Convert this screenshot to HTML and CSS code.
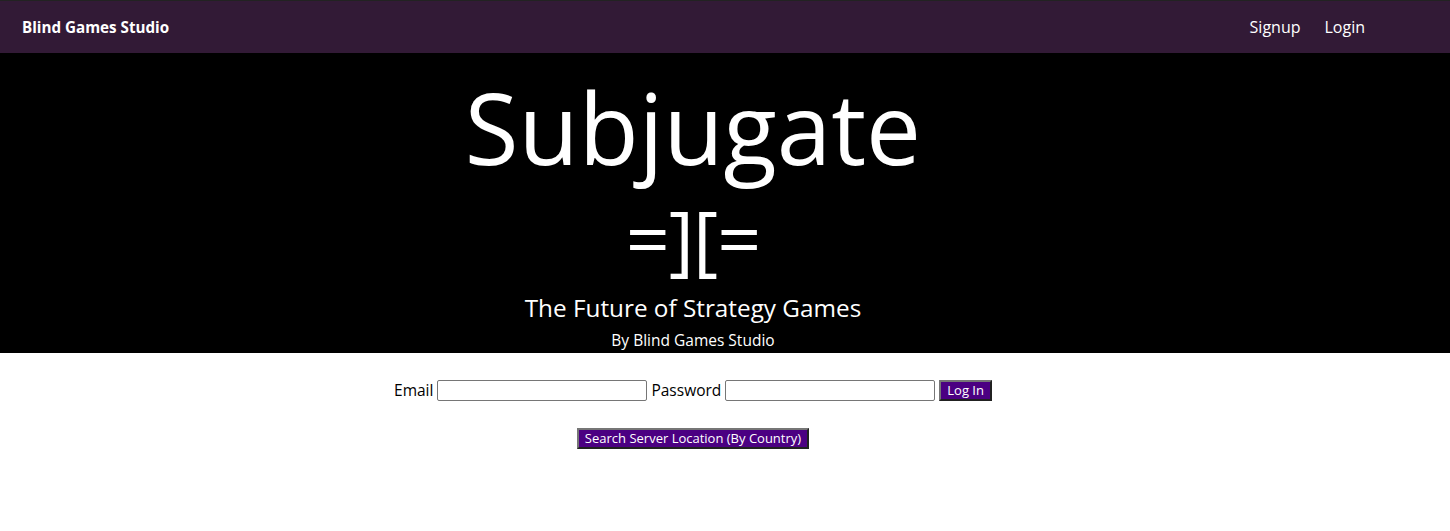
FILE: index.html
```html
<!DOCTYPE html>
<html lang="en">
<head>
<meta charset="utf-8">
<title>Subjugate - Blind Games Studio</title>
<link rel="stylesheet" href="styles.css">
</head>
<body>
<nav class="navbar">
  <a class="brand" href="#">Blind Games Studio</a>
  <div class="nav-links">
    <a href="#">Signup</a>
    <a href="#">Login</a>
  </div>
</nav>
<header class="hero">
  <h1 class="title">Subjugate</h1>
  <div class="logo">=][=</div>
  <h2 class="tagline">The Future of Strategy Games</h2>
  <p class="byline">By Blind Games Studio</p>
</header>
<main class="content">
  <form class="login-form">
    <label for="email">Email</label>
    <input id="email" type="text">
    <label for="password">Password</label>
    <input id="password" type="password">
    <button type="button" class="btn">Log In</button>
  </form>
  <div class="search-row">
    <button type="button" class="btn">Search Server Location (By Country)</button>
  </div>
</main>
</body>
</html>
```

FILE: styles.css
```css
html, body {
  margin: 0;
  padding: 0;
  background: #fff;
}
body {
  font-family: "Open Sans", "Noto Sans", sans-serif;
  color: #000;
}
.navbar {
  display: flex;
  align-items: center;
  justify-content: space-between;
  height: 52px;
  border-top: 1px solid #222;
  background: #321a36;
  padding: 0 85px 0 22px;
}
.navbar a {
  color: #fff;
  text-decoration: none;
  font-size: 16px;
}
.navbar .brand {
  font-weight: 700;
  font-size: 15.2px;
}
.nav-links {
  display: flex;
  gap: 24px;
}
.hero {
  background: #000;
  color: #fff;
  height: 300px;
  box-sizing: border-box;
  padding: 16px 64px 0 0;
  text-align: center;
}
.title {
  margin: 0;
  font-weight: 400;
  font-size: 98px;
  line-height: 116px;
}
.logo {
  font-size: 77px;
  line-height: 105px;
  letter-spacing: -1px;
}
.tagline {
  margin: 0;
  font-weight: 400;
  font-size: 24.3px;
  line-height: 35px;
}
.byline {
  margin: 0;
  font-size: 15.5px;
  line-height: 30px;
}
.content {
  padding: 26px 64px 0 0;
  text-align: center;
}
.login-form {
  display: flex;
  justify-content: center;
  align-items: center;
  gap: 4px;
  font-size: 15.5px;
}
.login-form input {
  width: 206px;
  height: 17px;
  border: 1px solid #767676;
  border-radius: 2px;
  padding: 1px;
  margin: 0;
}
.btn {
  font-family: inherit;
  font-size: 13px;
  color: #fff;
  background: #4b0082;
  border: 2px outset #767676;
  padding: 1px 6px;
  height: 21px;
  line-height: 15px;
}
.search-row {
  margin-top: 25px;
}
```
